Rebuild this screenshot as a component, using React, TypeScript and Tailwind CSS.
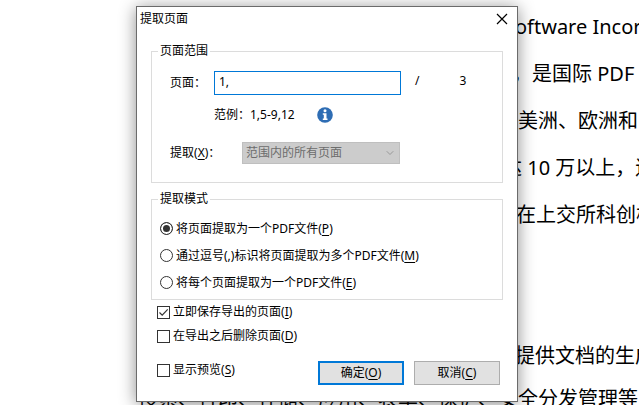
import { useState, type ReactNode } from 'react';
import { ChevronDown } from 'lucide-react';

const uiFont = "font-['Noto_Sans','Noto_Sans_CJK_SC',sans-serif]";

const modes = [
  { id: 'single', label: '将页面提取为一个PDF文件', accessKey: 'P' },
  { id: 'comma', label: '通过逗号(,)标识将页面提取为多个PDF文件', accessKey: 'M' },
  { id: 'each', label: '将每个页面提取为一个PDF文件', accessKey: 'E' },
];

function Key({ children }: { children: string }) {
  return (
    <>
      (<span className="underline underline-offset-2">{children}</span>)
    </>
  );
}

function Group({ title, className, children }: { title: string; className: string; children: ReactNode }) {
  return (
    <fieldset className={`border border-[#dcdcdc] ${className}`}>
      <legend className="ml-1.5 h-4 px-0.5 leading-4">{title}</legend>
      {children}
    </fieldset>
  );
}

function CheckRow({ label, accessKey, defaultChecked }: { label: string; accessKey: string; defaultChecked?: boolean }) {
  return (
    <label className="flex h-6 items-center gap-[3px]">
      <span className="grid">
        <input
          type="checkbox"
          defaultChecked={defaultChecked}
          className="peer col-start-1 row-start-1 size-[13px] appearance-none border border-[#333] bg-white"
        />
        <svg viewBox="0 0 13 13" className="pointer-events-none col-start-1 row-start-1 hidden size-[13px] peer-checked:block">
          <path d="M2.5 6.5 5.2 9.2 10.7 3.4" fill="none" stroke="#333" strokeWidth="1.2" />
        </svg>
      </span>
      <span>
        {label}
        <Key>{accessKey}</Key>
      </span>
    </label>
  );
}

function InfoIcon() {
  return (
    <svg viewBox="0 0 16 16" className="size-4">
      <circle cx="8" cy="8" r="7.8" fill="#2e6db4" />
      <circle cx="8" cy="3.8" r="1.5" fill="#fff" />
      <path d="M5.8 6.3h3.7v5.2h1v1.4H5.8v-1.4h1V7.700h-1z" fill="#fff" />
    </svg>
  );
}

function DocumentText() {
  return (
    <article className="whitespace-nowrap pt-[3px] font-['Noto_Sans','Noto_Sans_CJK_SC',sans-serif] text-xl leading-[47px]">
      <p className="pl-[504px]">Software Incor</p>
      <p className="pl-[512px]">，是国际 PDF</p>
      <p className="pl-[518px]">美洲、欧洲和</p>
      <p className="pl-[502px]">达 10 万以上，遍</p>
      <p className="pl-[516px]">在上交所科创板</p>
      <p className="mt-[94px] pl-[515px]">提供文档的生成</p>
      <p className="-mt-1 pl-[138px]">搜索、打印、存储、应用、表单、保护、安全分发管理等</p>
    </article>
  );
}

export default function App() {
  const [pages, setPages] = useState('1,');
  const [mode, setMode] = useState('single');

  return (
    <div className="relative h-screen overflow-hidden bg-white text-black">
      <DocumentText />

      <div
        role="dialog"
        aria-labelledby="dialog-title"
        className={`absolute left-[136px] top-1.5 w-[382px] border border-[#6b6b6b] bg-white text-xs leading-4 shadow-[0_2px_16px_rgba(0,0,0,0.45)] ${uiFont}`}
      >
        <header className="flex h-6 items-center justify-between pl-[3px] pr-2">
          <h1 id="dialog-title">提取页面</h1>
          <button type="button" aria-label="关闭">
            <svg viewBox="0 0 14 14" className="size-[14px]">
              <path d="M2 2 12 12M12 2 2 12" stroke="#000" strokeWidth="1.2" />
            </svg>
          </button>
        </header>

        <form className="px-3.5 pb-4 pt-3" onSubmit={(e) => e.preventDefault()}>
          <Group title="页面范围" className="h-[140px]">
            <div className="mt-3 flex h-6 items-center pl-[18px]">
              <label htmlFor="pages" className="w-11">
                页面：
              </label>
              <input
                id="pages"
                value={pages}
                onChange={(e) => setPages(e.target.value)}
                className="h-6 w-[187px] border border-[#0078d7] px-1 pb-1 outline-none"
              />
              <span className="ml-3.5 pb-1">/</span>
              <span className="ml-10 pb-1">3</span>
            </div>
            <div className="mt-2.5 flex h-5 items-center gap-[22px] pl-[62px]">
              <span>范例：1,5-9,12</span>
              <InfoIcon />
            </div>
            <div className="mt-[17px] flex h-[22px] items-center pl-[18px]">
              <label htmlFor="range" className="w-[72px]">
                提取
                <Key>X</Key>：
              </label>
              <div className="grid w-[158px] items-center">
                <select
                  id="range"
                  disabled
                  className="col-start-1 row-start-1 h-[22px] w-full appearance-none border border-[#bfbfbf] bg-[#ccc] px-[3px] text-[#6d6d6d] opacity-100"
                >
                  <option>范围内的所有页面</option>
                </select>
                <ChevronDown className="pointer-events-none col-start-1 row-start-1 mr-1 size-3 justify-self-end text-[#999]" />
              </div>
            </div>
          </Group>

          <Group title="提取模式" className="mt-2 pb-[3px]">
            <div className="mt-2 flex flex-col pl-2">
              {modes.map((m) => (
                <label key={m.id} className="flex h-[27px] items-center gap-[3px]">
                  <input
                    type="radio"
                    name="mode"
                    checked={mode === m.id}
                    onChange={() => setMode(m.id)}
                    className="size-[13px] appearance-none rounded-full border border-[#333] bg-white checked:bg-[#333] checked:shadow-[inset_0_0_0_2px_#fff]"
                  />
                  <span>
                    {m.label}
                    <Key>{m.accessKey}</Key>
                  </span>
                </label>
              ))}
            </div>
          </Group>

          <div className="pl-1.5">
            <CheckRow label="立即保存导出的页面" accessKey="I" defaultChecked />
            <CheckRow label="在导出之后删除页面" accessKey="D" />
          </div>

          <footer className="mt-2.5 flex items-end pl-1.5 pr-[3px]">
            <div className="self-start">
              <CheckRow label="显示预览" accessKey="S" />
            </div>
            <button type="submit" className="ml-auto mt-[3px] h-6 w-[86px] border-2 border-[#0078d7] bg-[#e1e1e1]">
              确定
              <Key>O</Key>
            </button>
            <button type="button" className="ml-2.5 h-6 w-[86px] border border-[#adadad] bg-[#e1e1e1]">
              取消
              <Key>C</Key>
            </button>
          </footer>
        </form>
      </div>
    </div>
  );
}
